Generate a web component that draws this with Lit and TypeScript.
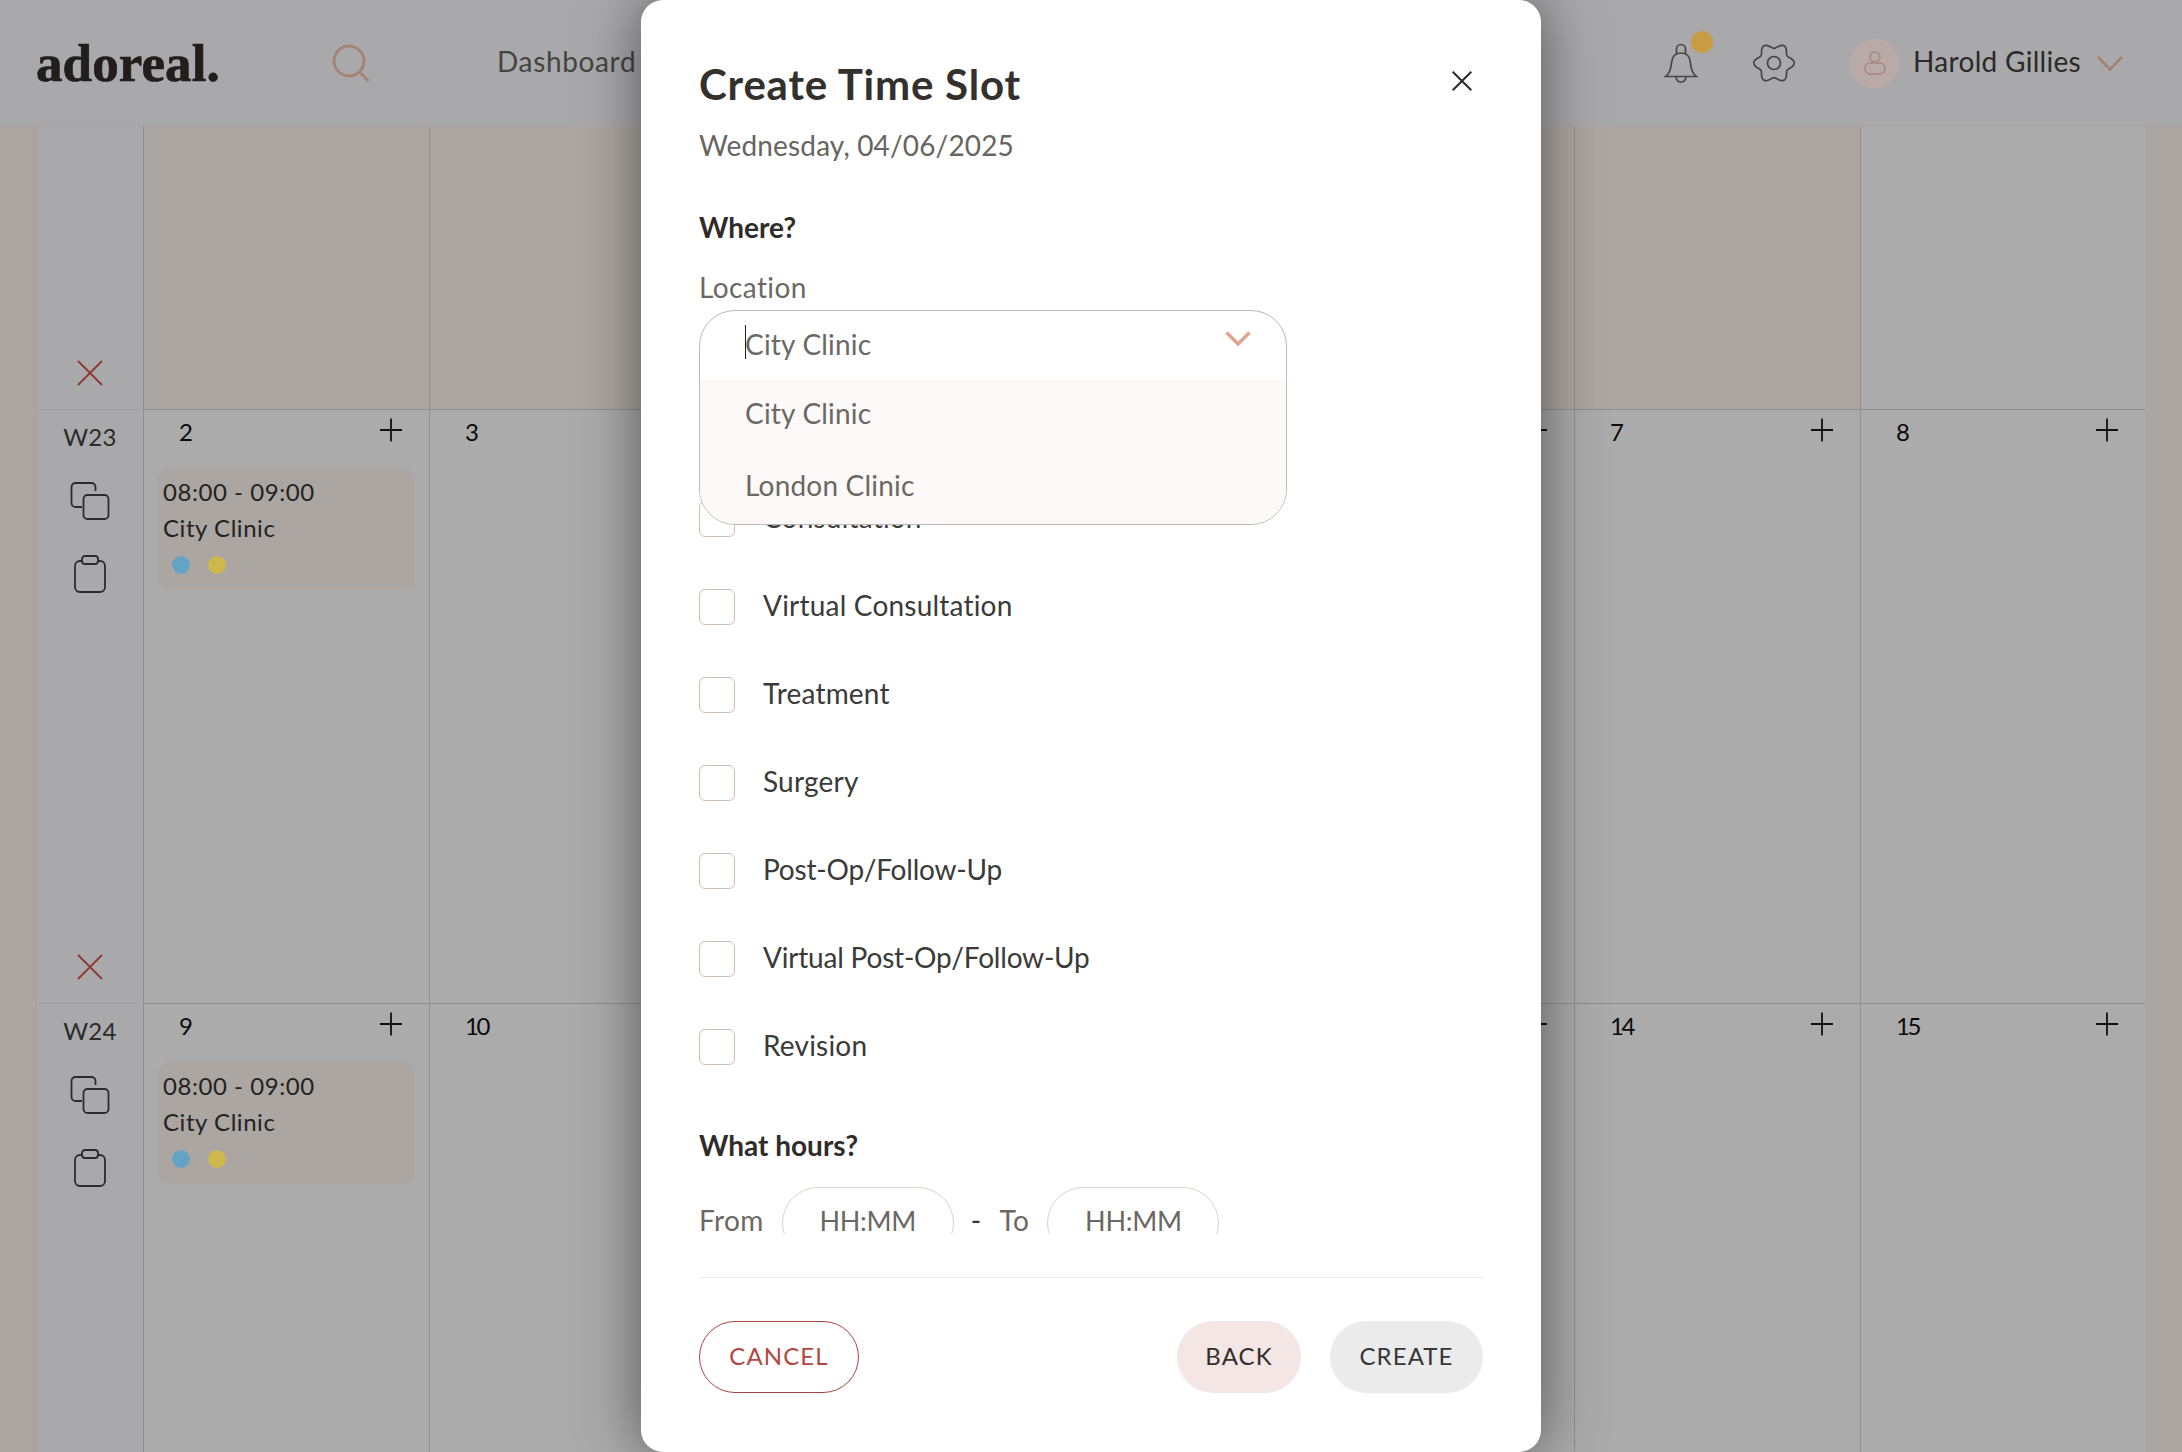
import { LitElement, html, css } from "lit";
import { customElement } from "lit/decorators.js";

const gearPath = (() => {
  const pts: string[] = [];
  for (let i = 0; i <= 180; i++) {
    const t = (i / 180) * Math.PI * 2;
    const r = 17.6 + 2.6 * Math.cos(6 * t);
    pts.push(`${(22 + r * Math.cos(t)).toFixed(2)} ${(21 + r * 0.98 * Math.sin(t)).toFixed(2)}`);
  }
  return "M" + pts.join("L") + "Z";
})();

const plus = html`<svg class="plus" width="24" height="24" viewBox="0 0 24 24"><path d="M12 .5v23M1 12h22"/></svg>`;
const cross = html`<svg class="cross" width="26" height="26" viewBox="0 0 26 26"><path d="M1 1l24 24M25 1L1 25"/></svg>`;
const copy = html`<svg class="line-icon" width="40" height="38" viewBox="0 0 40 38"><rect x="13.5" y="13" width="25" height="24" rx="4"/><path d="M25.5 9V5a4 4 0 0 0-4-4H5.5a4 4 0 0 0-4 4v16a4 4 0 0 0 4 4H12"/></svg>`;
const clip = html`<svg class="line-icon" width="32" height="38" viewBox="0 0 32 38"><path d="M8 6H6a5 5 0 0 0-5 5v21a5 5 0 0 0 5 5h20a5 5 0 0 0 5-5V11a5 5 0 0 0-5-5h-2"/><rect x="8" y="1" width="16" height="8" rx="3"/></svg>`;

interface Day { n: number; event?: boolean; }

const weeks: { label: string; days: Day[]; }[] = [
  { label: "W23", days: [2, 3, 4, 5, 6, 7, 8].map((n) => ({ n, event: n === 2 })) },
  { label: "W24", days: [9, 10, 11, 12, 13, 14, 15].map((n) => ({ n, event: n === 9 })) },
];
const firstRowTint = [true, true, true, true, true, true, false];
const types = ["Consultation", "Virtual Consultation", "Treatment", "Surgery", "Post-Op/Follow-Up", "Virtual Post-Op/Follow-Up", "Revision"];

@customElement("app-root")
export class AppRoot extends LitElement {
  static styles = css`
    :host {
      display: block;
      position: relative;
      width: 2182px;
      height: 1452px;
      overflow: hidden;
      background: #fff8f2;
      font-family: Lato, "Liberation Sans", sans-serif;
    }
    .top {
      height: 126px;
      background: #fcfdff;
      border-bottom: 1px solid #fff6f2;
      display: flex;
      align-items: center;
    }
    .logo {
      font-family: "Liberation Serif", serif;
      font-weight: 700;
      font-size: 53px;
      line-height: 60px;
      color: #332d29;
      margin-left: 36px;
      width: 296px;
      letter-spacing: 0.1px;
      -webkit-text-stroke: 0.7px #332d29;
    }
    .search { stroke: #f6c4ae; fill: none; stroke-width: 2.8; }
    .nav { margin: 0 0 5px 127px; font-size: 28px; letter-spacing: 0.65px; color: #696665; }
    .top-right { margin-left: auto; display: flex; align-items: center; }
    .bell-wrap { position: relative; width: 34px; height: 40px; margin-right: 54px; }
    .bell { stroke: #6a6867; fill: none; stroke-width: 1.7; display: block; }
    .badge { position: absolute; left: 27px; top: -12px; width: 22px; height: 22px; border-radius: 50%; background: #c79c45; z-index: 3; }
    .gear { stroke: #6a6867; fill: none; stroke-width: 1.7; margin-right: 54px; display: block; }
    .avatar { position: relative; z-index: 3; width: 49px; height: 49px; border-radius: 50%; background: #b9aaa7; display: flex; align-items: center; justify-content: center; margin-right: 14px; }
    .avatar svg { stroke: #a78683; fill: none; stroke-width: 1.5; }
    .user { font-size: 28px; color: #403f3d; letter-spacing: 0.3px; margin: 0 16px 5px 0; }
    .caret-down { stroke: #f6c4ae; fill: none; stroke-width: 2.8; margin-right: 59px; }

    .cal {
      margin: 0 37px 0 36px;
      display: grid;
      grid-template-columns: 107px repeat(4, 286px) 287px 286px 285px;
      grid-template-rows: 282px 594px 594px;
      background: #fff;
    }
    .wk {
      border-left: 1px solid #eeeeee;
      background: #fcfdff;
      display: flex;
      flex-direction: column;
      align-items: center;
    }
    .wk.row { border-top: 1px solid #f2f2f2; }
    .wk-label { margin-top: 12px; font-size: 24px; line-height: 30px; color: #424242; letter-spacing: 0.3px; }
    .line-icon { fill: none; stroke: #424242; stroke-width: 1.8; display: block; }
    .wk-copy { margin-top: 30px; }
    .wk-clip { margin-top: 35px; }
    .cross { stroke: #d4544c; fill: none; stroke-width: 1.8; display: block; }
    .wk-x { margin-top: auto; margin-bottom: 23px; }
    .cell { border-left: 1px solid #d8d8d8; padding: 0 26px 0 35px; min-width: 0; background: #fff; }
    .cell.tint { background: #fff8f2; }
    .cell.row { border-top: 1px solid #d4d4d4; }
    .cell-head { display: flex; justify-content: space-between; align-items: flex-start; height: 58px; }
    .num { font-size: 24px; line-height: 30px; margin-top: 7px; color: #111; letter-spacing: -2.5px; }
    .plus { stroke: #1a1a1a; stroke-width: 1.8; fill: none; margin-top: 8px; display: block; }
    .event {
      margin: 0 -12px 0 -21px;
      height: 122px;
      border-radius: 12px;
      background: #fff8f2;
      padding: 6px 5px 0;
      box-sizing: border-box;
      color: #363331;
      font-size: 24px;
      line-height: 36px;
      letter-spacing: 0.55px;
    }
    .dots { display: flex; gap: 18px; padding: 10px 0 0 9px; }
    .dots i { position: relative; z-index: 3; width: 18px; height: 18px; border-radius: 50%; display: block; }
    .d1 { background: #64a3c6; }
    .d2 { background: #cdb84e; }

    .backdrop { position: absolute; inset: 0; background: rgba(0, 0, 0, 0.33); z-index: 2; }
    .modal {
      position: absolute;
      left: 641px;
      top: 0;
      width: 900px;
      height: 1452px;
      background: #fff;
      border-radius: 22px;
      box-shadow: 0 0 60px rgba(0, 0, 0, 0.5);
      z-index: 4;
      display: flex;
      flex-direction: column;
    }
    .scroll { height: 1234px; box-sizing: border-box; padding: 60px 58px 0; overflow: hidden; position: relative; flex: none; }
    h1 { margin: 0; font-size: 42px; line-height: 48px; font-weight: 700; color: #33302d; letter-spacing: 0.8px; }
    .close { position: absolute; right: 69px; top: 71px; stroke: #2b2b2b; stroke-width: 2; fill: none; display: block; }
    .date { margin-top: 19px; font-size: 28px; line-height: 36px; color: #686460; letter-spacing: 0.15px; }
    h2 { margin: 46px 0 0; font-size: 28px; line-height: 36px; font-weight: 700; color: #2f2c2a; }
    .field-label { margin-top: 24px; font-size: 28px; line-height: 36px; color: #6b6864; letter-spacing: 0.4px; }
    .select { margin-top: 5px; width: 588px; height: 69px; position: relative; }
    .select-box {
      position: absolute;
      left: 0;
      top: 0;
      right: 0;
      height: 213px;
      border: 1px solid #bcb8b6;
      border-radius: 36px;
      background: #fff;
      overflow: hidden;
      z-index: 2;
      font-size: 28px;
      color: #6b6864;
      letter-spacing: 0.2px;
    }
    .sel-head { height: 69px; box-sizing: border-box; padding: 0 0 4px 45px; display: flex; align-items: center; position: relative; }
    .sel-caret { position: absolute; left: 45px; top: 14px; width: 1px; height: 34px; background: #222; }
    .sel-chev { position: absolute; left: 525px; top: 20px; stroke: #dda592; stroke-width: 3.4; fill: none; }
    .opt { height: 72px; box-sizing: border-box; padding: 0 0 7px 45px; display: flex; align-items: center; background: #fdf9f8; }
    .checks { margin-top: 96px; }
    .check { height: 88px; display: flex; align-items: center; gap: 28px; font-size: 28px; color: #3a3a38; letter-spacing: 0.2px; }
    .check b { font-weight: 400; margin-bottom: 4px; }
    .check b.tight { letter-spacing: -0.2px; }
    .box { width: 34px; height: 34px; border: 1px solid #d4bdb2; border-radius: 6px; background: #fff; flex: none; }
    .hours { margin-top: 36px; }
    .time { margin-top: 24px; display: flex; align-items: center; font-size: 28px; color: #6b6864; letter-spacing: 0.4px; }
    .time span { margin-bottom: 6px; }
    .input { width: 172px; height: 72px; box-sizing: border-box; padding-bottom: 6px; border: 1px solid #ddd3ce; border-radius: 36px; display: flex; align-items: center; justify-content: center; flex: none; font-size: 27px; letter-spacing: -0.3px; }
    .from { margin-right: 18px; }
    .dash { margin: 0 18px 0 17px; color: #333; }
    .to { margin-right: 18px; }
    .divider { margin: 43px 58px 0; height: 1px; background: #ededed; flex: none; }
    .foot { margin: 43px 58px 0; display: flex; align-items: center; gap: 29px; }
    .btn { height: 72px; box-sizing: border-box; padding-bottom: 4px; border-radius: 36px; display: flex; align-items: center; justify-content: center; font-size: 24px; letter-spacing: 1.1px; }
    .cancel { width: 160px; border: 1px solid #a8443e; color: #b2483f; margin-right: auto; }
    .back { width: 124px; background: #f3e6e5; color: #332f2d; }
    .create { width: 153px; background: #ebebeb; color: #38363a; }
  `;

  private weekCol(label: string) {
    return html`<div class="wk row">
      <div class="wk-label">${label}</div>
      <div class="wk-copy">${copy}</div>
      <div class="wk-clip">${clip}</div>
      <div class="wk-x">${cross}</div>
    </div>`;
  }

  render() {
    return html`
      <header class="top">
        <div class="logo">adoreal.</div>
        <svg class="search" width="38" height="38" viewBox="0 0 38 38"><circle cx="17" cy="17" r="15"/><path d="M27.5 28l9 9"/></svg>
        <div class="nav">Dashboard</div>
        <div class="top-right">
          <div class="bell-wrap">
            <svg class="bell" width="34" height="40" viewBox="0 0 34 40"><path d="M1.5 33.5C5 31 7 26 7.5 20 8 14 11 10 17 10s9 4 9.5 10c.5 6 2.5 11 6 13.5z"/><path d="M12.5 11.5V6a4.5 4.5 0 0 1 9 0v5.5M12 34a5 5 0 0 0 10 0"/></svg>
            <div class="badge"></div>
          </div>
          <svg class="gear" width="44" height="42" viewBox="0 0 44 42"><path d="${gearPath}"/><ellipse cx="22" cy="21" rx="6.5" ry="6.5"/></svg>
          <div class="avatar">
            <svg width="22" height="24" viewBox="0 0 22 24"><circle cx="11" cy="6" r="5"/><rect x="1" y="12" width="20" height="11" rx="5"/></svg>
          </div>
          <div class="user">Harold Gillies</div>
          <svg class="caret-down" width="26" height="15" viewBox="0 0 26 15"><path d="M1 1l12 12.5L25 1"/></svg>
        </div>
      </header>

      <main class="cal">
        <div class="wk"><div class="wk-x">${cross}</div></div>
        ${firstRowTint.map((t) => html`<div class="cell ${t ? "tint" : ""}"></div>`)}
        ${weeks.map((w) => html`
          ${this.weekCol(w.label)}
          ${w.days.map((d) => html`<div class="cell row">
            <div class="cell-head"><span class="num">${d.n}</span>${plus}</div>
            ${d.event ? html`<div class="event">
              <div>08:00 - 09:00</div>
              <div>City Clinic</div>
              <div class="dots"><i class="d1"></i><i class="d2"></i></div>
            </div>` : ""}
          </div>`)}
        `)}
      </main>

      <div class="backdrop"></div>

      <section class="modal">
        <div class="scroll">
          <h1>Create Time Slot</h1>
          <svg class="close" width="20" height="20" viewBox="0 0 20 20"><path d="M.7.7l18.6 18.6M19.3.7L.7 19.3"/></svg>
          <div class="date">Wednesday, 04/06/2025</div>
          <h2>Where?</h2>
          <div class="field-label">Location</div>
          <div class="select">
            <div class="select-box">
              <div class="sel-head">
                <span class="sel-caret"></span>City Clinic
                <svg class="sel-chev" width="26" height="15" viewBox="0 0 26 15"><path d="M1.5 1.5L13 13 24.5 1.5"/></svg>
              </div>
              <div class="opt">City Clinic</div>
              <div class="opt">London Clinic</div>
            </div>
          </div>
          <div class="checks">
            ${types.map((t) => html`<label class="check"><span class="box"></span><b class="${t.includes("/") ? "tight" : ""}">${t}</b></label>`)}
          </div>
          <h2 class="hours">What hours?</h2>
          <div class="time">
            <span class="from">From</span>
            <div class="input">HH:MM</div>
            <span class="dash">-</span>
            <span class="to">To</span>
            <div class="input">HH:MM</div>
          </div>
        </div>
        <div class="divider"></div>
        <div class="foot">
          <div class="btn cancel">CANCEL</div>
          <div class="btn back">BACK</div>
          <div class="btn create">CREATE</div>
        </div>
      </section>
    `;
  }
}
